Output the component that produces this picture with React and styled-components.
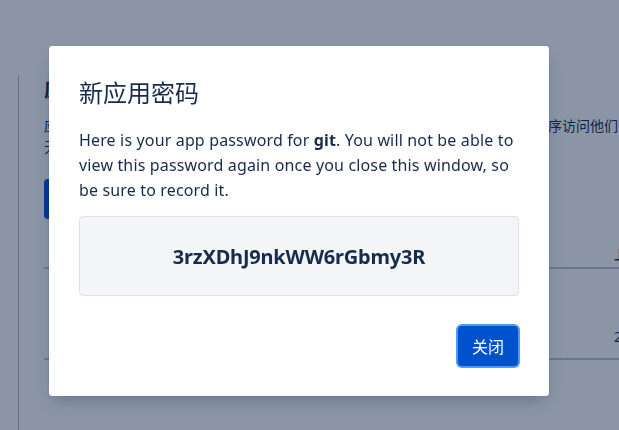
import React from 'react'
import styled, { createGlobalStyle } from 'styled-components'

const GlobalStyle = createGlobalStyle`
  html, body {
    margin: 0;
    padding: 0;
  }
  body {
    font-family: "Noto Sans", "Noto Sans CJK SC", sans-serif;
    color: #172b4d;
    background: #fff;
    overflow: hidden;
  }
`

const Page = styled.div`
  width: 619px;
  height: 430px;
  overflow: hidden;
  display: flex;
  padding-top: 75px;
  box-sizing: border-box;
`

const Sidebar = styled.div`
  width: 18px;
  flex-shrink: 0;
  border-right: 1px solid #b3bac5;
`

const Main = styled.div`
  flex-shrink: 0;
  width: 820px;
  padding-left: 25px;
`

const PageTitle = styled.h1`
  margin: 3px 0 0;
  font-size: 20px;
  font-weight: 600;
  line-height: 24px;
`

const Desc = styled.p`
  margin: 13px 0 0;
  font-size: 14px;
  line-height: 21px;
  white-space: nowrap;
`

const PrimaryButton = styled.button`
  margin-top: 22px;
  height: 40px;
  padding: 0 16px;
  border: none;
  border-radius: 4px;
  background: #0052cc;
  color: #fff;
  font: inherit;
  font-size: 14px;
`

const Table = styled.div`
  display: flex;
  flex-direction: column;
`

const Row = styled.div`
  display: grid;
  grid-template-columns: 570px 200px;
  height: ${p => p.height}px;
  border-bottom: 2px solid #c1c7d0;
  align-items: ${p => (p.head ? 'end' : 'start')};
`

const HeadCell = styled.div`
  padding: 0 0 2px ${p => p.inset || 0}px;
  font-size: 12px;
  font-weight: 700;
  line-height: 18px;
  color: #172b4d;
`

const Cell = styled.div`
  padding: ${p => p.offset || 0}px 0 0 ${p => p.inset || 0}px;
  font-size: 14px;
  line-height: 20px;
`

const Blanket = styled.div`
  position: fixed;
  inset: 0;
  background: rgba(9, 30, 66, 0.47);
`

const Modal = styled.div`
  position: fixed;
  left: 49px;
  top: 46px;
  width: 500px;
  height: 350px;
  box-sizing: border-box;
  padding: 30px;
  display: flex;
  flex-direction: column;
  background: #fff;
  border-radius: 3px;
  box-shadow: 0 8px 16px -4px rgba(9, 30, 66, 0.25), 0 0 1px rgba(9, 30, 66, 0.31);
`

const ModalTitle = styled.h2`
  margin: 0;
  font-family: "Noto Sans CJK SC", "Noto Sans", sans-serif;
  font-size: 24px;
  font-weight: 400;
  line-height: 32px;
  color: #172b4d;
`

const ModalText = styled.p`
  margin: 20px 0 0;
  font-size: 16px;
  line-height: 25px;
  letter-spacing: 0.15px;
  color: #172b4d;

  b {
    font-weight: 700;
  }
`

const PasswordBox = styled.div`
  margin-top: 13px;
  height: 80px;
  box-sizing: border-box;
  display: flex;
  align-items: center;
  justify-content: center;
  background: #f4f5f7;
  border: 1px solid #dfe1e6;
  border-radius: 4px;
  font-size: 20px;
  font-weight: 700;
  letter-spacing: -0.2px;
  color: #172b4d;
`

const Footer = styled.div`
  margin-top: auto;
  display: flex;
  justify-content: flex-end;
`

const CloseButton = styled.button`
  height: 40px;
  margin-right: 1px;
  padding: 0 14px;
  border: none;
  border-radius: 4px;
  background: #0052cc;
  color: #fff;
  font-family: "Noto Sans CJK SC", sans-serif;
  font-size: 16px;
  box-shadow: 0 0 0 2px #4c9aff;
  cursor: pointer;
`

export default function App () {
  return (
    <>
      <GlobalStyle/>
      <Page>
        <Sidebar/>
        <Main>
          <PageTitle>应用密码</PageTitle>
          <Desc>
            应用密码允许用户通过不支持双重身份验证的第三方工具、脚本或者其他的应用程序访问他们的 Bitbucket 帐户。
            <br/>
            无需使用帐户密码即可进行身份验证。
          </Desc>
          <PrimaryButton>创建应用密码</PrimaryButton>
          <Table>
            <Row head height={48}>
              <HeadCell inset={12}>标签</HeadCell>
              <HeadCell>上次访问</HeadCell>
            </Row>
            <Row height={89}>
              <Cell inset={12} offset={8}>git</Cell>
              <Cell offset={58}>2024年3月12日</Cell>
            </Row>
          </Table>
        </Main>
      </Page>
      <Blanket/>
      <Modal role="dialog">
        <ModalTitle>新应用密码</ModalTitle>
        <ModalText>
          Here is your app password for <b>git</b>. You will not be able to view this password again once you close this window, so be sure to record it.
        </ModalText>
        <PasswordBox>3rzXDhJ9nkWW6rGbmy3R</PasswordBox>
        <Footer>
          <CloseButton>关闭</CloseButton>
        </Footer>
      </Modal>
    </>
  )
}
